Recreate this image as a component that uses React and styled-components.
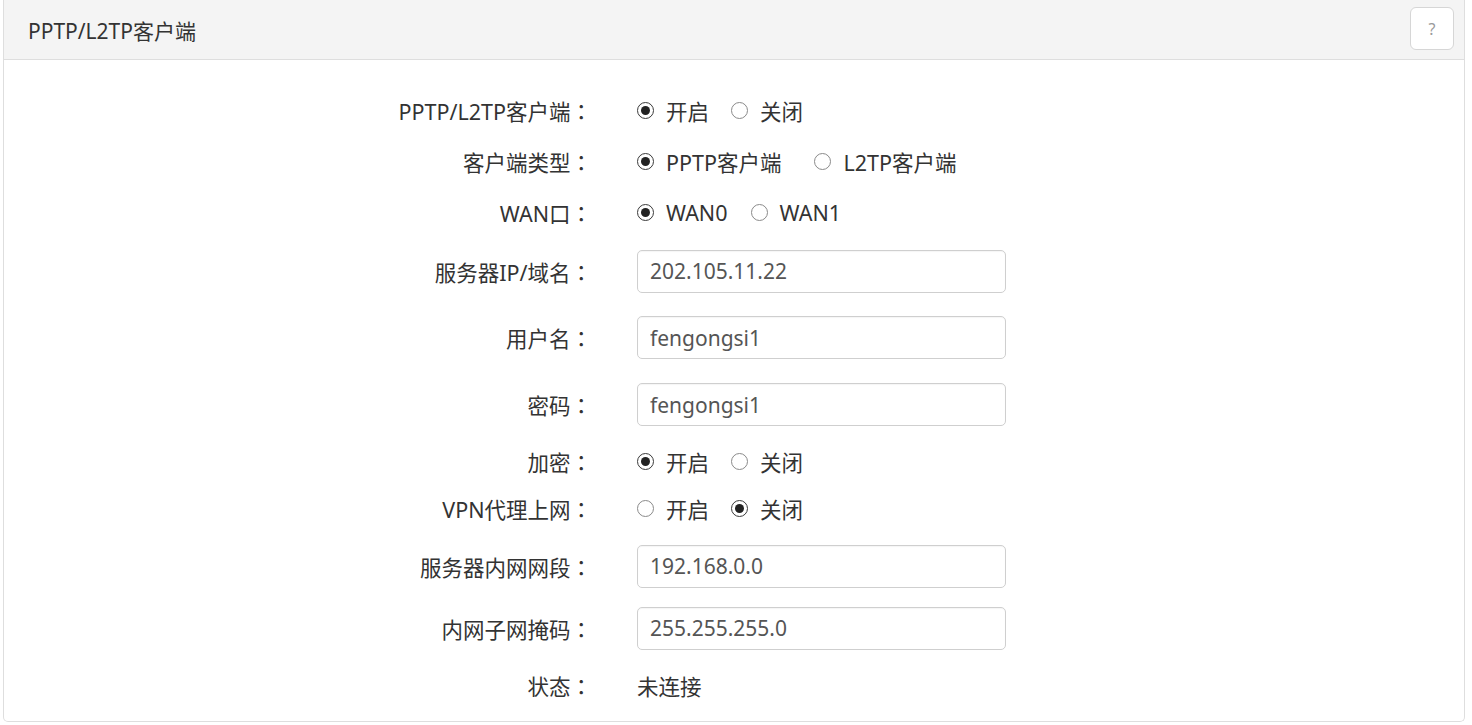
import React from "react";
import styled, { createGlobalStyle } from "styled-components";

const Global = createGlobalStyle`
  html, body { margin: 0; padding: 0; background: #fff; }
  body {
    font-family: "Noto Sans", "Noto Sans CJK SC", sans-serif;
    color: #333;
  }
`;

const Page = styled.div`
  padding: 0 7px 2px 3px;
`;

const Panel = styled.section`
  border: 1px solid #dedede;
  border-top: 0;
  border-radius: 0 0 5px 5px;
  background: #fff;
`;

const Header = styled.div`
  height: 60px;
  box-sizing: border-box;
  background: #f4f4f4;
  border-bottom: 1px solid #dedede;
  display: flex;
  align-items: center;
  justify-content: space-between;
  padding: 0 10px 0 24px;
`;

const Title = styled.h3`
  margin: 0;
  font-size: 21px;
  font-weight: 400;
  color: #333;
`;

const HelpButton = styled.button`
  width: 44px;
  height: 43px;
  box-sizing: border-box;
  border: 1px solid #d6d6d6;
  border-radius: 6px;
  background: #fff;
  color: #9a9a9a;
  font-family: "Noto Sans", sans-serif;
  font-size: 16px;
  padding: 0;
  margin-top: -2px;
`;

const Form = styled.div`
  padding: 25px 0 6px;
`;

const Row = styled.div`
  display: grid;
  grid-template-columns: 588px 1fr;
  align-items: center;
  height: ${(p) => p.$h}px;
`;

const Label = styled.div`
  text-align: right;
  font-size: 21.5px;
  color: #333;
  white-space: nowrap;
`;

const Colon = styled.span`
  font-family: "Noto Sans CJK JP", sans-serif;
`;

const Control = styled.div`
  padding-left: 45px;
  display: flex;
  align-items: center;
  font-size: 21.5px;
  color: #333;
`;

const RadioOption = styled.label`
  display: flex;
  align-items: center;
  margin-right: ${(p) => p.$gap || 22}px;
  white-space: nowrap;
`;

const RadioMark = styled.span`
  width: 17px;
  height: 17px;
  box-sizing: border-box;
  border-radius: 50%;
  border: 1px solid ${(p) => (p.$on ? "#3a3a3a" : "#8a8a8a")};
  display: inline-flex;
  align-items: center;
  justify-content: center;
  margin-right: 12px;
  background: #fff;
  &::after {
    content: "";
    width: 9px;
    height: 9px;
    border-radius: 50%;
    background: ${(p) => (p.$on ? "#222" : "transparent")};
  }
`;

const TextInput = styled.input`
  width: 369px;
  height: 43px;
  box-sizing: border-box;
  border: 1px solid #cfcfcf;
  border-radius: 5px;
  padding: 0 12px;
  font-family: "Noto Sans", "Noto Sans CJK SC", sans-serif;
  font-size: 21px;
  color: #555;
  outline: none;
  box-shadow: inset 0 1px 1px rgba(0, 0, 0, 0.04);
`;

const Radios = ({ options }) => (
  <Control>
    {options.map((o, i) => (
      <RadioOption key={i} $gap={o.gap}>
        <RadioMark $on={o.on} />
        {o.text}
      </RadioOption>
    ))}
  </Control>
);

const InputCtl = ({ value }) => (
  <Control>
    <TextInput defaultValue={value} />
  </Control>
);

const FieldLabel = ({ children }) => (
  <Label>
    {children}
    <Colon>：</Colon>
  </Label>
);

export default function App() {
  return (
    <>
      <Global />
      <Page>
        <Panel>
          <Header>
            <Title>PPTP/L2TP客户端</Title>
            <HelpButton>?</HelpButton>
          </Header>
          <Form>
            <Row $h={51}>
              <FieldLabel>PPTP/L2TP客户端</FieldLabel>
              <Radios options={[{ on: true, text: "开启" }, { on: false, text: "关闭" }]} />
            </Row>
            <Row $h={51}>
              <FieldLabel>客户端类型</FieldLabel>
              <Radios
                options={[
                  { on: true, text: "PPTP客户端", gap: 33 },
                  { on: false, text: "L2TP客户端" },
                ]}
              />
            </Row>
            <Row $h={51}>
              <FieldLabel>WAN口</FieldLabel>
              <Radios
                options={[
                  { on: true, text: "WAN0", gap: 23 },
                  { on: false, text: "WAN1" },
                ]}
              />
            </Row>
            <Row $h={66}>
              <FieldLabel>服务器IP/域名</FieldLabel>
              <InputCtl value="202.105.11.22" />
            </Row>
            <Row $h={67}>
              <FieldLabel>用户名</FieldLabel>
              <InputCtl value="fengongsi1" />
            </Row>
            <Row $h={67}>
              <FieldLabel>密码</FieldLabel>
              <InputCtl value="fengongsi1" />
            </Row>
            <Row $h={47}>
              <FieldLabel>加密</FieldLabel>
              <Radios options={[{ on: true, text: "开启" }, { on: false, text: "关闭" }]} />
            </Row>
            <Row $h={46}>
              <FieldLabel>VPN代理上网</FieldLabel>
              <Radios options={[{ on: false, text: "开启" }, { on: true, text: "关闭" }]} />
            </Row>
            <Row $h={70}>
              <FieldLabel>服务器内网网段</FieldLabel>
              <InputCtl value="192.168.0.0" />
            </Row>
            <Row $h={54}>
              <FieldLabel>内网子网掩码</FieldLabel>
              <InputCtl value="255.255.255.0" />
            </Row>
            <Row $h={60}>
              <FieldLabel>状态</FieldLabel>
              <Control>未连接</Control>
            </Row>
          </Form>
        </Panel>
      </Page>
    </>
  );
}
